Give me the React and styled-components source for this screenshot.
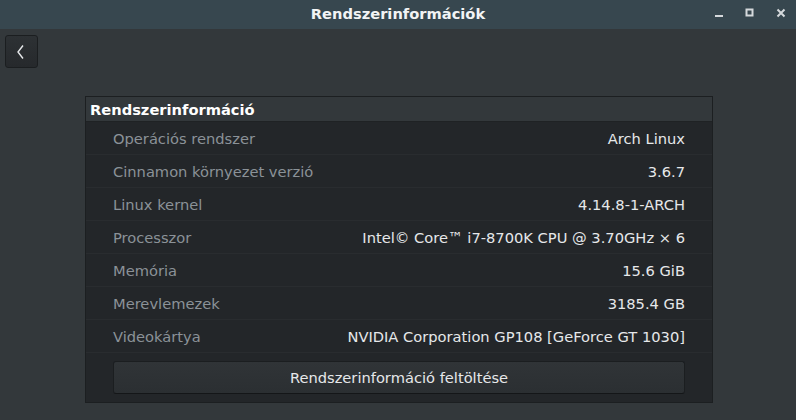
import styled, { createGlobalStyle } from 'styled-components'

const GlobalStyle = createGlobalStyle`
  html, body {
    margin: 0;
    padding: 0;
    background: #33383b;
  }
  body {
    font-family: "DejaVu Sans", "Noto Sans", sans-serif;
    font-size: 14.67px;
  }
`

const rows = [
  ['Operációs rendszer', 'Arch Linux'],
  ['Cinnamon környezet verzió', '3.6.7'],
  ['Linux kernel', '4.14.8-1-ARCH'],
  ['Processzor', 'Intel© Core™ i7-8700K CPU @ 3.70GHz × 6'],
  ['Memória', '15.6 GiB'],
  ['Merevlemezek', '3185.4 GB'],
  ['Videokártya', 'NVIDIA Corporation GP108 [GeForce GT 1030]'],
]

export default function App() {
  return (
    <Window>
      <GlobalStyle />
      <TitleBar>
        <Title>Rendszerinformációk</Title>
        <WinButtons>
          <WinButton aria-label="minimize">
            <svg width="10" height="10" viewBox="0 0 10 10">
              <rect x="1" y="7" width="8" height="2" fill="#d5d9dc" />
            </svg>
          </WinButton>
          <WinButton aria-label="maximize">
            <svg width="10" height="10" viewBox="0 0 10 10">
              <rect x="1.5" y="1.5" width="6" height="6" fill="none" stroke="#d5d9dc" strokeWidth="2" />
            </svg>
          </WinButton>
          <WinButton aria-label="close">
            <svg width="10" height="10" viewBox="0 0 10 10">
              <path d="M1.5 1.5 L8.5 8.5 M8.5 1.5 L1.5 8.5" stroke="#d5d9dc" strokeWidth="2" />
            </svg>
          </WinButton>
        </WinButtons>
      </TitleBar>
      <Body>
        <Toolbar>
          <BackButton aria-label="back">
            <svg width="12" height="16" viewBox="0 0 12 16">
              <path d="M7 1.5 L2 8 L7 14.5" fill="none" stroke="#e6e8ea" strokeWidth="1.4" />
            </svg>
          </BackButton>
        </Toolbar>
        <Frame>
          <FrameHeader>Rendszerinformáció</FrameHeader>
          <List>
            {rows.map(([label, value]) => (
              <Row key={label}>
                <Label>{label}</Label>
                <Value>{value}</Value>
              </Row>
            ))}
            <Footer>
              <UploadButton>Rendszerinformáció feltöltése</UploadButton>
            </Footer>
          </List>
        </Frame>
      </Body>
    </Window>
  )
}

const Window = styled.div`
  width: 796px;
  height: 420px;
  overflow: hidden;
  display: flex;
  flex-direction: column;
  background: #33383b;
`

const TitleBar = styled.div`
  height: 29px;
  flex: none;
  background: #37474f;
  display: flex;
  align-items: center;
  justify-content: center;
  position: relative;
`

const Title = styled.div`
  color: #f2f4f5;
  font-weight: bold;
  font-size: 14.67px;
  margin-top: -2px;
`

const WinButtons = styled.div`
  position: absolute;
  right: 10px;
  top: 5px;
  display: flex;
  gap: 21px;
`

const WinButton = styled.div`
  width: 10px;
  height: 10px;
  display: flex;
  align-items: center;
  justify-content: center;
  margin-top: 3px;
`

const Body = styled.div`
  flex: 1;
  display: flex;
  flex-direction: column;
`

const Toolbar = styled.div`
  height: 67px;
  padding: 6px 5px 0;
  box-sizing: border-box;
`

const BackButton = styled.div`
  width: 33px;
  height: 33px;
  box-sizing: border-box;
  border: 1px solid #1b1e20;
  border-radius: 3px;
  background: linear-gradient(#2d3134, #26292c);
  display: flex;
  align-items: center;
  justify-content: center;
`

const Frame = styled.div`
  margin: 0 0 0 85px;
  width: 628px;
  height: 307px;
  box-sizing: border-box;
  border: 1px solid #1c1f21;
  display: flex;
  flex-direction: column;
  background: #232629;
`

const FrameHeader = styled.div`
  height: 24px;
  flex: none;
  background: #33383b;
  color: #ffffff;
  font-weight: bold;
  padding: 0 4px;
  display: flex;
  align-items: center;
  border-bottom: 1px solid #1f2224;
`

const List = styled.div`
  flex: 1;
  display: flex;
  flex-direction: column;
`

const Row = styled.div`
  height: 33px;
  box-sizing: border-box;
  padding: 0 27px;
  display: flex;
  align-items: center;
  justify-content: space-between;
  border-bottom: 1px solid #292c2f;
`

const Label = styled.span`
  color: #8b9298;
`

const Value = styled.span`
  color: #e6e8ea;
`

const Footer = styled.div`
  padding: 8px 27px 0;
`

const UploadButton = styled.div`
  height: 33px;
  box-sizing: border-box;
  border: 1px solid #1b1e20;
  border-bottom-color: #141618;
  border-radius: 3px;
  background: linear-gradient(#303437, #2b2f32);
  color: #e6e8ea;
  display: flex;
  align-items: center;
  justify-content: center;
`
